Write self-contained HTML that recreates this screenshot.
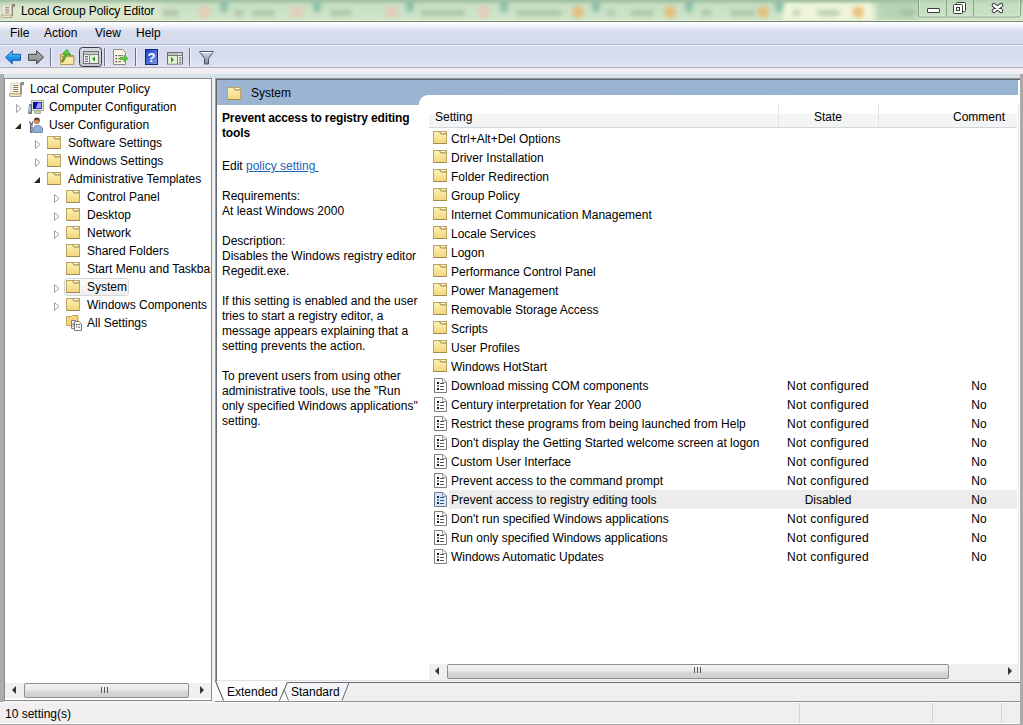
<!DOCTYPE html>
<html><head><meta charset="utf-8">
<style>
*{box-sizing:border-box;margin:0;padding:0}
html,body{width:1023px;height:725px;overflow:hidden;background:#f0f0f0}
body{position:relative;font-family:"Liberation Sans",sans-serif;font-size:12px;color:#000}
.a{position:absolute}
.t{position:absolute;white-space:nowrap;line-height:15px}
svg.i{position:absolute;overflow:visible}
#title{left:0;top:0;width:1023px;height:22px;background:linear-gradient(180deg,#b4d0b2 0%,#c8e0c4 30%,#d2e6ca 100%)}
#titleline{left:0;top:20px;width:1023px;height:2px;background:linear-gradient(180deg,#e0ecd8 0 1px,#7a8878 1px 2px)}
#menu{left:0;top:22px;width:1023px;height:23px;background:linear-gradient(180deg,#ffffff 0px,#fafbfe 2px,#e6e9f6 6px,#d8ddee 9px,#d5daec 100%)}
#menuline{left:0;top:44px;width:1023px;height:2px;background:linear-gradient(180deg,#b2b6c9 0 1px,#eef0fc 1px 2px)}
#tool{left:0;top:46px;width:1023px;height:21px;background:linear-gradient(180deg,#d6dbed 0%,#d7dcee 60%,#dfe3f3 100%)}
#toolline{left:0;top:67px;width:1023px;height:1px;background:#b0afb8}
#strip1{left:0;top:68px;width:1023px;height:6px;background:linear-gradient(180deg,#efeef0 0 5px,#eaf0f8 5px 6px)}
#strip2{left:0;top:74px;width:1023px;height:4px;background:#d6e2e8}
#lframe{left:0;top:74px;width:4px;height:651px;background:#acacac}
#rframe{left:1020px;top:74px;width:3px;height:651px;background:#aaaaaa}
#lpane{left:4px;top:78px;width:208px;height:623px;background:#fff;border:1px solid #8a8a8a}
#rpane{left:215px;top:78px;width:805px;height:603px;background:#fff}
#rpb1{left:215px;top:78px;width:805px;height:1px;background:#8c9498}
#rpb2{left:216px;top:79px;width:804px;height:1px;background:#5e6872}
#rpb3{left:215px;top:78px;width:1px;height:603px;background:#98a0a8}
#rpb4{left:216px;top:79px;width:1px;height:602px;background:#5e6872}
#rpb5{left:1018px;top:105px;width:1px;height:575px;background:#e6e6e6}
#hdr{left:217px;top:80px;width:801px;height:25px;background:linear-gradient(90deg,#a6b8cc 0px,#9ab4d2 6px,#99b4d1 100%)}
#listbg{left:419px;top:95px;width:599px;height:585px;background:#fff;border-top-left-radius:9px}
#status{left:0;top:703px;width:1020px;height:20px;background:#f0eeee}
.sb{background:#f0f0f0}
.thumb{background:linear-gradient(180deg,#f3f3f3 0%,#e9e9e9 45%,#d8d8d8 55%,#cfcfcf 100%);border:1px solid #8f8f8f;border-radius:2px}
.grip{width:7px;height:6px;background:repeating-linear-gradient(90deg,#555 0 1px,transparent 1px 3px)}
.larr{width:0;height:0;border-top:4px solid transparent;border-bottom:4px solid transparent;border-right:4px solid #333}
.rarr{width:0;height:0;border-top:4px solid transparent;border-bottom:4px solid transparent;border-left:4px solid #333}
.menu{top:26px}
.tr{top:0}
</style></head><body>
<svg width="0" height="0" style="position:absolute">
<defs>
<linearGradient id="fg" x1="0" y1="0" x2="0" y2="1"><stop offset="0" stop-color="#fdf1b6"/><stop offset="1" stop-color="#f1d77c"/></linearGradient>
<symbol id="fold" viewBox="0 0 14 13">
<rect x="0.5" y="0.5" width="13" height="12" fill="url(#fg)" stroke="#bba466"/>
<path d="M7.5 1 L13 1 L13 3 L8.5 3 Z" fill="#eadca0"/>
<rect x="8.5" y="1" width="3" height="1.3" fill="#fffdf0"/>
<path d="M6.5 0.8 L8 3 H13.2" fill="none" stroke="#8c7a44" stroke-width="0.9"/>
<path d="M0.5 12.5 H13.5" stroke="#a08a50" stroke-width="1"/>
</symbol>
<symbol id="doc" viewBox="0 0 13 15">
<path d="M0.5 0.5h8.5l3.5 3.5v10.5h-12z" fill="#fff" stroke="#7e7e7e"/>
<path d="M8.5 0.5v4h4" fill="none" stroke="#9a9a9a"/>
<rect x="3" y="4" width="2" height="2" fill="#111"/><rect x="3" y="7" width="2" height="2" fill="#888"/><rect x="3" y="10" width="2" height="2" fill="#111"/>
<rect x="6" y="5" width="4" height="1" fill="#555"/><rect x="6" y="8" width="4" height="1" fill="#555"/><rect x="6" y="11" width="4" height="1" fill="#555"/>
</symbol>
<symbol id="docsel" viewBox="0 0 13 15">
<path d="M0.5 0.5h8.5l3.5 3.5v10.5h-12z" fill="#d6e8fa" stroke="#6f7f90"/>
<path d="M8.5 0.5v4h4" fill="none" stroke="#8a9aaa"/>
<rect x="3" y="4" width="2" height="2" fill="#0a2a55"/><rect x="3" y="7" width="2" height="2" fill="#7890aa"/><rect x="3" y="10" width="2" height="2" fill="#0a2a55"/>
<rect x="6" y="5" width="4" height="1" fill="#3a5070"/><rect x="6" y="8" width="4" height="1" fill="#3a5070"/><rect x="6" y="11" width="4" height="1" fill="#3a5070"/>
</symbol>
<symbol id="tri" viewBox="0 0 6 9"><path d="M0.5 0.5l4.5 4-4.5 4z" fill="#fff" stroke="#a0a0a0"/></symbol>
<symbol id="trid" viewBox="0 0 6 6"><path d="M6 0v6h-6z" fill="#262626"/></symbol>
<symbol id="scroll" viewBox="0 0 15 15">
<path d="M2 1.2h10v11h-10z" fill="#fbf5e6" stroke="#cfc4aa" stroke-width="0.8"/>
<path d="M12 12.5v-10.5c0-0.8 0.6-1.5 1.4-1.5c0.9 0 1.3 1 0.8 1.7l-1 0.9" fill="none" stroke="#7a7260" stroke-width="1.3"/>
<path d="M4.2 3.5h5M4.2 5.5h5M4.2 7.5h5M4.2 9.5h5" stroke="#857b6a" stroke-width="1"/>
<path d="M0.6 11.8h11v2.7h-10.2c-0.8 0-1.2-0.6-1-1.4z" fill="#f3e6c2" stroke="#a39676" stroke-width="0.9"/>
</symbol>
</defs>
</svg>

<div id="title" class="a" style="overflow:hidden">
<div class="a" style="left:783px;top:2px;width:92px;height:24px;background:#eef5d8;border-radius:6px;filter:blur(2.5px)"></div>
<div class="a" style="left:0px;top:3px;width:165px;height:20px;background:#e0e9cf;border-radius:10px;filter:blur(5px);opacity:.8"></div>
<div class="a" style="left:878px;top:0;width:40px;height:22px;background:#a8c8a8;filter:blur(4px);opacity:.6"></div>
<div class="a" style="left:220px;top:-3px;width:8px;height:16px;background:#80bca4;border-radius:50%;filter:blur(2px);opacity:.85"></div>
<div class="a" style="left:313px;top:-3px;width:8px;height:16px;background:#80bca4;border-radius:50%;filter:blur(2px);opacity:.85"></div>
<div class="a" style="left:406px;top:-3px;width:8px;height:16px;background:#80bca4;border-radius:50%;filter:blur(2px);opacity:.85"></div>
<div class="a" style="left:500px;top:-3px;width:8px;height:16px;background:#80bca4;border-radius:50%;filter:blur(2px);opacity:.85"></div>
<div class="a" style="left:592px;top:-3px;width:8px;height:16px;background:#80bca4;border-radius:50%;filter:blur(2px);opacity:.85"></div>
<div class="a" style="left:685px;top:-3px;width:8px;height:16px;background:#80bca4;border-radius:50%;filter:blur(2px);opacity:.85"></div>
<div class="a" style="left:775px;top:-3px;width:8px;height:16px;background:#80bca4;border-radius:50%;filter:blur(2px);opacity:.85"></div>
<div class="a" style="left:199px;top:6px;width:12px;height:12px;background:#eec4b4;border-radius:50%;filter:blur(2px);opacity:.75"></div>
<div class="a" style="left:291px;top:6px;width:12px;height:12px;background:#eec4b4;border-radius:50%;filter:blur(2px);opacity:.75"></div>
<div class="a" style="left:386px;top:6px;width:12px;height:12px;background:#eec4b4;border-radius:50%;filter:blur(2px);opacity:.75"></div>
<div class="a" style="left:478px;top:6px;width:12px;height:12px;background:#eec4b4;border-radius:50%;filter:blur(2px);opacity:.75"></div>
<div class="a" style="left:572px;top:6px;width:12px;height:12px;background:#ecb464;border-radius:50%;filter:blur(2px);opacity:.75"></div>
<div class="a" style="left:664px;top:6px;width:12px;height:12px;background:#ecb464;border-radius:50%;filter:blur(2px);opacity:.75"></div>
<div class="a" style="left:757px;top:6px;width:12px;height:12px;background:#ecb464;border-radius:50%;filter:blur(2px);opacity:.75"></div>
<div class="a" style="left:852px;top:6px;width:12px;height:12px;background:#ecb464;border-radius:50%;filter:blur(2px);opacity:.75"></div>
<div class="a" style="left:162px;top:10px;width:17px;height:6px;background:#90aa8c;border-radius:3px;filter:blur(2px);opacity:.5"></div>
<div class="a" style="left:234px;top:10px;width:10px;height:6px;background:#90aa8c;border-radius:3px;filter:blur(2px);opacity:.5"></div>
<div class="a" style="left:252px;top:10px;width:23px;height:6px;background:#90aa8c;border-radius:3px;filter:blur(2px);opacity:.5"></div>
<div class="a" style="left:330px;top:10px;width:22px;height:6px;background:#90aa8c;border-radius:3px;filter:blur(2px);opacity:.5"></div>
<div class="a" style="left:420px;top:10px;width:45px;height:6px;background:#90aa8c;border-radius:3px;filter:blur(2px);opacity:.5"></div>
<div class="a" style="left:516px;top:10px;width:46px;height:6px;background:#90aa8c;border-radius:3px;filter:blur(2px);opacity:.5"></div>
<div class="a" style="left:607px;top:10px;width:8px;height:6px;background:#90aa8c;border-radius:3px;filter:blur(2px);opacity:.5"></div>
<div class="a" style="left:630px;top:10px;width:24px;height:6px;background:#90aa8c;border-radius:3px;filter:blur(2px);opacity:.5"></div>
<div class="a" style="left:701px;top:10px;width:11px;height:6px;background:#90aa8c;border-radius:3px;filter:blur(2px);opacity:.5"></div>
<div class="a" style="left:730px;top:10px;width:25px;height:6px;background:#90aa8c;border-radius:3px;filter:blur(2px);opacity:.5"></div>
<div class="a" style="left:793px;top:10px;width:7px;height:6px;background:#90aa8c;border-radius:3px;filter:blur(2px);opacity:.5"></div>
<div class="a" style="left:817px;top:10px;width:23px;height:6px;background:#90aa8c;border-radius:3px;filter:blur(2px);opacity:.5"></div>
<div class="a" style="left:900px;top:10px;width:15px;height:6px;background:#90aa8c;border-radius:3px;filter:blur(2px);opacity:.5"></div>
<div class="a" style="left:0;top:0;width:1023px;height:4px;background:linear-gradient(180deg,#a0bea0,rgba(180,208,178,0))"></div>
</div>
<div id="titleline" class="a"></div>
<svg class="i" style="left:917px;top:0" width="106" height="19" viewBox="0 0 106 19">
<path d="M1.5 0v14.5c0 1.5 1 2.5 2.5 2.5h97c1.5 0 2.5-1 2.5-2.5v-14.5" fill="#c4dec2" fill-opacity="0.6" stroke="#7f9e80" stroke-width="1"/>
<path d="M2.5 0v14c0 1 0.7 2 2 2h96c1.3 0 2-1 2-2v-14" fill="none" stroke="#e4f0e2" stroke-opacity="0.7" stroke-width="1"/>
<path d="M29.5 0v16.5M56.5 0v16.5" stroke="#8aa88a" stroke-width="1"/>
<rect x="10.5" y="8.5" width="12" height="4" rx="0.5" fill="#fff" stroke="#3a3a3a"/>
<rect x="39.5" y="2.5" width="9" height="9" rx="1" fill="#fff" stroke="#3a3a3a"/>
<rect x="36.5" y="4.5" width="9" height="9" rx="1" fill="#fff" stroke="#3a3a3a"/>
<rect x="39.5" y="7.5" width="3" height="3" fill="none" stroke="#3a3a3a"/>
<path d="M77 5.2 L84 10.8 M84 5.2 L77 10.8" stroke="#3a3a3a" stroke-width="4.6" stroke-linecap="round"/>
<path d="M77 5.2 L84 10.8 M84 5.2 L77 10.8" stroke="#fff" stroke-width="2.6" stroke-linecap="round"/>
</svg>
<svg class="i" style="left:1px;top:4px" width="14" height="14"><use href="#scroll" width="14" height="14"/></svg>
<div class="t" style="left:21px;top:4px;letter-spacing:-0.08px">Local Group Policy Editor</div>

<div id="menu" class="a"></div>
<div id="menuline" class="a"></div>
<div class="t menu" style="left:10px">File</div>
<div class="t menu" style="left:44px">Action</div>
<div class="t menu" style="left:95px">View</div>
<div class="t menu" style="left:136px">Help</div>

<div id="tool" class="a"></div>
<div id="toolline" class="a"></div>
<svg class="i" style="left:0;top:45px" width="230" height="22" viewBox="0 45 230 22">
<defs>
<linearGradient id="bb" x1="0" y1="0" x2="0" y2="1"><stop offset="0" stop-color="#7fd3ff"/><stop offset="0.5" stop-color="#1c9ae8"/><stop offset="1" stop-color="#0a64c8"/></linearGradient>
<linearGradient id="gb" x1="0" y1="0" x2="0" y2="1"><stop offset="0" stop-color="#b8b8b8"/><stop offset="1" stop-color="#858585"/></linearGradient>
<linearGradient id="pb" x1="0" y1="0" x2="0" y2="1"><stop offset="0" stop-color="#d9dbe3"/><stop offset="1" stop-color="#c4c7d2"/></linearGradient>
<linearGradient id="hb" x1="0" y1="0" x2="1" y2="1"><stop offset="0" stop-color="#1a3cc0"/><stop offset="1" stop-color="#7a9ae8"/></linearGradient>
<linearGradient id="fu" x1="0" y1="0" x2="0" y2="1"><stop offset="0" stop-color="#d8e0e8"/><stop offset="1" stop-color="#7a8a98"/></linearGradient>
</defs>
<!-- back -->
<path d="M5.5 57.3 L12.3 50.8 V54.3 H20.5 V60.3 H12.3 V63.8 Z" fill="url(#bb)" stroke="#1b5fa8" stroke-width="1" stroke-linejoin="round"/>
<!-- forward -->
<path d="M43.5 57.3 L36.7 50.8 V54.3 H28.5 V60.3 H36.7 V63.8 Z" fill="url(#gb)" stroke="#3d3d3d" stroke-width="1" stroke-linejoin="round"/>
<!-- sep -->
<rect x="50" y="48" width="1" height="18" fill="#6e7282"/><rect x="51" y="48" width="1" height="18" fill="#f4f5fa"/>
<!-- up folder -->
<path d="M60.5 54.5h4l1 1h8.3v9h-13.3z" fill="#f0d888" stroke="#b89c55"/>
<path d="M60.5 56.5h13.3v8h-13.3z" fill="#f9e6a4" stroke="#b89c55"/>
<path d="M62.5 61 L66.5 54" stroke="#58b83a" stroke-width="3" stroke-linecap="round"/>
<path d="M62.3 61.3 L64 58.3" stroke="#7a8a2a" stroke-width="2" stroke-linecap="round"/>
<path d="M62.8 53.5 L67 49.5 L70.8 55.2 Z" fill="#5ad040" stroke="#2f9a20" stroke-width="0.8" stroke-linejoin="round"/>
<!-- pressed button -->
<rect x="79.5" y="47.5" width="22" height="19" rx="3" fill="url(#pb)" stroke="#3a3d44" stroke-width="1"/>
<rect x="83.5" y="51.5" width="15" height="12" fill="#f4f4f4" stroke="#707070"/>
<rect x="84" y="52" width="14" height="2" fill="#c8c8c8"/>
<path d="M84 54.5h14" stroke="#8a8a8a"/>
<rect x="90" y="55" width="8" height="8" fill="#e6f4dc"/>
<path d="M89.5 55v8" stroke="#8a8a8a"/>
<rect x="85" y="56" width="3" height="1.2" fill="#6a6a6a"/><rect x="85" y="58.4" width="3" height="1.2" fill="#6a6a6a"/><rect x="85" y="60.8" width="3" height="1.2" fill="#6a6a6a"/>
<path d="M95 56.5 L92 59 L95 61.5 Z" fill="#3c8a2c"/>
<!-- sep -->
<rect x="104" y="48" width="1" height="18" fill="#6e7282"/><rect x="105" y="48" width="1" height="18" fill="#f4f5fa"/>
<!-- export -->
<path d="M113.5 49.5h9l3 3v12h-12z" fill="#fdf8e4" stroke="#8a8a80"/>
<rect x="115.5" y="55" width="1.3" height="1.3" fill="#222"/><rect x="115.5" y="58" width="1.3" height="1.3" fill="#222"/><rect x="115.5" y="61" width="1.3" height="1.3" fill="#222"/>
<rect x="118" y="55.2" width="5" height="1" fill="#666"/><rect x="118" y="58.2" width="3" height="1" fill="#666"/><rect x="118" y="61.2" width="3" height="1" fill="#666"/>
<path d="M120 57.5h4v-2.5l4 3.5-4 3.5v-2.5h-4z" fill="#5ccc3c" stroke="#3a9a28" stroke-width="0.6"/>
<!-- sep -->
<rect x="135" y="48" width="1" height="18" fill="#6e7282"/><rect x="136" y="48" width="1" height="18" fill="#f4f5fa"/>
<!-- help -->
<rect x="145.5" y="49.5" width="12" height="15" fill="url(#hb)" stroke="#14287a"/>
<text x="151.6" y="62.3" font-family="Liberation Sans" font-weight="bold" font-size="13" fill="#fff" text-anchor="middle">?</text>
<!-- action pane -->
<rect x="167.5" y="52.5" width="15" height="11.5" fill="#fff" stroke="#6e6e6e"/>
<rect x="168" y="53" width="14" height="2" fill="#bdbdbd"/>
<rect x="178" y="53.3" width="1.2" height="1.2" fill="#fff"/><rect x="180.2" y="53.3" width="1.2" height="1.2" fill="#fff"/>
<path d="M168 55.5h14" stroke="#7a7a7a"/>
<rect x="168" y="56" width="9" height="7.5" fill="#e2f2d4"/>
<path d="M177.5 56v8" stroke="#7a7a7a"/>
<path d="M171 57 L174 59.7 L171 62.4 Z" fill="#3f8a2e"/>
<rect x="179" y="57" width="2.5" height="1.2" fill="#6a6a6a"/><rect x="179" y="59.3" width="2.5" height="1.2" fill="#6a6a6a"/><rect x="179" y="61.6" width="2.5" height="1.2" fill="#6a6a6a"/>
<!-- sep -->
<rect x="189" y="48" width="1" height="18" fill="#6e7282"/><rect x="190" y="48" width="1" height="18" fill="#f4f5fa"/>
<!-- filter -->
<path d="M199.5 51.5h14l-5 7v5.5h-4v-5.5z" fill="url(#fu)" stroke="#4a5560" stroke-width="1" stroke-linejoin="round"/>
<path d="M200.5 52.5h12" stroke="#f4f8fa" stroke-width="1"/>
</svg>
<div id="strip1" class="a"></div>
<div id="strip2" class="a"></div>
<div id="lframe" class="a"></div>
<div id="rframe" class="a"></div>

<!-- left tree pane -->
<div id="lpane" class="a"></div>
<svg class="i" style="left:9px;top:82px" width="15" height="15"><use href="#scroll" width="15" height="15"/></svg>
<div class="t" style="left:30px;top:82px">Local Computer Policy</div>
<svg class="i" style="left:16px;top:104px" width="6" height="9"><use href="#tri" width="6" height="9"/></svg>
<svg class="i" style="left:28px;top:100px" width="16" height="14" viewBox="0 0 16 14">
<rect x="3.5" y="0.5" width="12" height="10" fill="#d8e2c8" stroke="#a7b39a"/>
<rect x="5" y="2" width="9" height="7" fill="#3232e0"/>
<path d="M5 2h5l-3 7h-2z" fill="#0a0ab0"/><path d="M10 3h3v5h-5z" fill="#9c9cf0"/>
<path d="M6.5 11h6v2.5h-6z" fill="#c9cfb4" stroke="#a5ab92" stroke-width="0.8"/>
<path d="M1.5 4.5h2v9h-2.8z" fill="#8d9bb0" stroke="#5f6f86" stroke-width="1"/>
<path d="M1.8 6v6" stroke="#e9eef5" stroke-width="0.8"/>
</svg>
<div class="t" style="left:49px;top:100px">Computer Configuration</div>
<svg class="i" style="left:15px;top:123px" width="6" height="6"><use href="#trid" width="6" height="6"/></svg>
<svg class="i" style="left:28px;top:117px" width="16" height="16" viewBox="0 0 16 16">
<path d="M5 15.5v-3.5c0-2 1.8-3.5 4.5-3.5s5 1.5 5 3.5v3.5z" fill="#8fb0d2" stroke="#6f8eb0" stroke-width="1"/>
<circle cx="8.8" cy="4.3" r="3" fill="#c98d62"/>
<path d="M5.8 3.8c0-2.5 1.5-3.3 3-3.3s3 0.8 3 3l-0.8 1c-0.3-1.5-1.5-2-2.8-1.7z" fill="#5a3a22"/>
<path d="M1.5 4.5l1 2.5v8.5h1.5v-8.5l1-2.5-1 2h-1.5z" fill="#b9c7d8" stroke="#4a5a70" stroke-width="0.9"/>
</svg>
<div class="t" style="left:49px;top:118px">User Configuration</div>

<svg class="i" style="left:35px;top:140px" width="6" height="9"><use href="#tri" width="6" height="9"/></svg>
<svg class="i" style="left:47px;top:136px" width="14" height="13"><use href="#fold" width="14" height="13"/></svg>
<div class="t" style="left:68px;top:136px">Software Settings</div>
<svg class="i" style="left:35px;top:158px" width="6" height="9"><use href="#tri" width="6" height="9"/></svg>
<svg class="i" style="left:47px;top:154px" width="14" height="13"><use href="#fold" width="14" height="13"/></svg>
<div class="t" style="left:68px;top:154px">Windows Settings</div>
<svg class="i" style="left:34px;top:177px" width="6" height="6"><use href="#trid" width="6" height="6"/></svg>
<svg class="i" style="left:47px;top:172px" width="14" height="13"><use href="#fold" width="14" height="13"/></svg>
<div class="t" style="left:68px;top:172px">Administrative Templates</div>

<svg class="i" style="left:54px;top:194px" width="6" height="9"><use href="#tri" width="6" height="9"/></svg>
<svg class="i" style="left:66px;top:190px" width="14" height="13"><use href="#fold" width="14" height="13"/></svg>
<div class="t" style="left:87px;top:190px">Control Panel</div>
<svg class="i" style="left:54px;top:212px" width="6" height="9"><use href="#tri" width="6" height="9"/></svg>
<svg class="i" style="left:66px;top:208px" width="14" height="13"><use href="#fold" width="14" height="13"/></svg>
<div class="t" style="left:87px;top:208px">Desktop</div>
<svg class="i" style="left:54px;top:230px" width="6" height="9"><use href="#tri" width="6" height="9"/></svg>
<svg class="i" style="left:66px;top:226px" width="14" height="13"><use href="#fold" width="14" height="13"/></svg>
<div class="t" style="left:87px;top:226px">Network</div>
<svg class="i" style="left:66px;top:244px" width="14" height="13"><use href="#fold" width="14" height="13"/></svg>
<div class="t" style="left:87px;top:244px">Shared Folders</div>
<svg class="i" style="left:66px;top:262px" width="14" height="13"><use href="#fold" width="14" height="13"/></svg>
<div class="a" style="left:87px;top:262px;width:124px;height:16px;overflow:hidden"><div class="t" style="left:0;top:0">Start Menu and Taskbar</div></div>
<div class="a" style="left:64px;top:278px;width:65px;height:18px;background:linear-gradient(180deg,#fcfcfc,#efefef);border:1px solid #d6d6d6;border-radius:3px"></div>
<svg class="i" style="left:54px;top:284px" width="6" height="9"><use href="#tri" width="6" height="9"/></svg>
<svg class="i" style="left:66px;top:280px" width="14" height="13"><use href="#fold" width="14" height="13"/></svg>
<div class="t" style="left:87px;top:280px">System</div>
<svg class="i" style="left:54px;top:302px" width="6" height="9"><use href="#tri" width="6" height="9"/></svg>
<svg class="i" style="left:66px;top:298px" width="14" height="13"><use href="#fold" width="14" height="13"/></svg>
<div class="a" style="left:87px;top:298px;width:124px;height:16px;overflow:hidden"><div class="t" style="left:0;top:0">Windows Components</div></div>
<svg class="i" style="left:66px;top:315px" width="16" height="16" viewBox="0 0 16 16">
<path d="M0.5 1.5h5l1-1h5.5v10h-11.5z" fill="#f3d77f" stroke="#c2a35a"/>
<path d="M5.5 5.5h4l2 2v6h-6z" fill="#fff" stroke="#7d7d7d"/>
<path d="M8.5 6.5h4.5l2.5 2.5v6.5h-7z" fill="#fff" stroke="#7a7a7a"/>
<rect x="10" y="9" width="1.2" height="1.2" fill="#222"/><rect x="12" y="9.2" width="2.2" height="0.9" fill="#555"/>
<rect x="10" y="11.5" width="1.2" height="1.2" fill="#777"/><rect x="12" y="11.7" width="2.2" height="0.9" fill="#555"/>
<rect x="6.5" y="8.5" width="1.2" height="1.2" fill="#222"/><rect x="6.5" y="10.5" width="1.2" height="1.2" fill="#777"/>
</svg>
<div class="t" style="left:87px;top:316px">All Settings</div>

<!-- right pane -->
<div id="rpane" class="a"></div><div id="rpb1" class="a"></div><div id="rpb2" class="a"></div><div id="rpb3" class="a"></div><div id="rpb4" class="a"></div><div id="rpb5" class="a"></div>
<div id="hdr" class="a"></div>
<svg class="i" style="left:227px;top:87px" width="14" height="13"><use href="#fold" width="14" height="13"/></svg>
<div class="t" style="left:251px;top:86px">System</div>
<div id="listbg" class="a"></div>
<!-- description -->
<div class="t" style="left:222px;top:111px;font-weight:bold;letter-spacing:-0.14px">Prevent access to registry editing</div>
<div class="t" style="left:222px;top:126px;font-weight:bold;letter-spacing:-0.14px">tools</div>
<div class="t" style="left:222px;top:159px">Edit <span style="color:#1c62b9;text-decoration:underline">policy setting&nbsp;</span></div>
<div class="t" style="left:222px;top:189px">Requirements:</div>
<div class="t" style="left:222px;top:204px">At least Windows 2000</div>
<div class="t" style="left:222px;top:234px">Description:</div>
<div class="t" style="left:222px;top:249px">Disables the Windows registry editor</div>
<div class="t" style="left:222px;top:264px">Regedit.exe.</div>
<div class="t" style="left:222px;top:294px">If this setting is enabled and the user</div>
<div class="t" style="left:222px;top:309px">tries to start a registry editor, a</div>
<div class="t" style="left:222px;top:324px">message appears explaining that a</div>
<div class="t" style="left:222px;top:339px">setting prevents the action.</div>
<div class="t" style="left:222px;top:369px">To prevent users from using other</div>
<div class="t" style="left:222px;top:384px">administrative tools, use the "Run</div>
<div class="t" style="left:222px;top:399px">only specified Windows applications"</div>
<div class="t" style="left:222px;top:414px">setting.</div>
<!-- list header -->
<div class="a" style="left:429px;top:104px;width:588px;height:24px;background:linear-gradient(180deg,#fff 0%,#fff 42%,#f3f4f6 46%,#f3f4f6 100%);border-bottom:1px solid #d5d5d5"></div>
<div class="a" style="left:778px;top:104px;width:1px;height:23px;background:#e2e3e5"></div>
<div class="a" style="left:878px;top:104px;width:1px;height:23px;background:#e2e3e5"></div>
<div class="t" style="left:435px;top:110px">Setting</div>
<div class="t" style="left:778px;width:100px;text-align:center;top:110px">State</div>
<div class="t" style="left:929px;width:100px;text-align:center;top:110px">Comment</div>
<svg class="i" style="left:433px;top:131px" width="14" height="13"><use href="#fold" width="14" height="13"/></svg><div class="t" style="left:451px;top:132px">Ctrl+Alt+Del Options</div>
<svg class="i" style="left:433px;top:150px" width="14" height="13"><use href="#fold" width="14" height="13"/></svg><div class="t" style="left:451px;top:151px">Driver Installation</div>
<svg class="i" style="left:433px;top:169px" width="14" height="13"><use href="#fold" width="14" height="13"/></svg><div class="t" style="left:451px;top:170px">Folder Redirection</div>
<svg class="i" style="left:433px;top:188px" width="14" height="13"><use href="#fold" width="14" height="13"/></svg><div class="t" style="left:451px;top:189px">Group Policy</div>
<svg class="i" style="left:433px;top:207px" width="14" height="13"><use href="#fold" width="14" height="13"/></svg><div class="t" style="left:451px;top:208px">Internet Communication Management</div>
<svg class="i" style="left:433px;top:226px" width="14" height="13"><use href="#fold" width="14" height="13"/></svg><div class="t" style="left:451px;top:227px">Locale Services</div>
<svg class="i" style="left:433px;top:245px" width="14" height="13"><use href="#fold" width="14" height="13"/></svg><div class="t" style="left:451px;top:246px">Logon</div>
<svg class="i" style="left:433px;top:264px" width="14" height="13"><use href="#fold" width="14" height="13"/></svg><div class="t" style="left:451px;top:265px">Performance Control Panel</div>
<svg class="i" style="left:433px;top:283px" width="14" height="13"><use href="#fold" width="14" height="13"/></svg><div class="t" style="left:451px;top:284px">Power Management</div>
<svg class="i" style="left:433px;top:302px" width="14" height="13"><use href="#fold" width="14" height="13"/></svg><div class="t" style="left:451px;top:303px">Removable Storage Access</div>
<svg class="i" style="left:433px;top:321px" width="14" height="13"><use href="#fold" width="14" height="13"/></svg><div class="t" style="left:451px;top:322px">Scripts</div>
<svg class="i" style="left:433px;top:340px" width="14" height="13"><use href="#fold" width="14" height="13"/></svg><div class="t" style="left:451px;top:341px">User Profiles</div>
<svg class="i" style="left:433px;top:359px" width="14" height="13"><use href="#fold" width="14" height="13"/></svg><div class="t" style="left:451px;top:360px">Windows HotStart</div>
<svg class="i" style="left:434px;top:378px" width="13" height="15"><use href="#doc" width="13" height="15"/></svg><div class="t" style="left:451px;top:379px">Download missing COM components</div>
<div class="t" style="left:778px;width:100px;text-align:center;top:379px;letter-spacing:0.28px">Not configured</div><div class="t" style="left:929px;width:100px;text-align:center;top:379px">No</div>
<svg class="i" style="left:434px;top:397px" width="13" height="15"><use href="#doc" width="13" height="15"/></svg><div class="t" style="left:451px;top:398px">Century interpretation for Year 2000</div>
<div class="t" style="left:778px;width:100px;text-align:center;top:398px;letter-spacing:0.28px">Not configured</div><div class="t" style="left:929px;width:100px;text-align:center;top:398px">No</div>
<svg class="i" style="left:434px;top:416px" width="13" height="15"><use href="#doc" width="13" height="15"/></svg><div class="t" style="left:451px;top:417px">Restrict these programs from being launched from Help</div>
<div class="t" style="left:778px;width:100px;text-align:center;top:417px;letter-spacing:0.28px">Not configured</div><div class="t" style="left:929px;width:100px;text-align:center;top:417px">No</div>
<svg class="i" style="left:434px;top:435px" width="13" height="15"><use href="#doc" width="13" height="15"/></svg><div class="t" style="left:451px;top:436px">Don&#39;t display the Getting Started welcome screen at logon</div>
<div class="t" style="left:778px;width:100px;text-align:center;top:436px;letter-spacing:0.28px">Not configured</div><div class="t" style="left:929px;width:100px;text-align:center;top:436px">No</div>
<svg class="i" style="left:434px;top:454px" width="13" height="15"><use href="#doc" width="13" height="15"/></svg><div class="t" style="left:451px;top:455px">Custom User Interface</div>
<div class="t" style="left:778px;width:100px;text-align:center;top:455px;letter-spacing:0.28px">Not configured</div><div class="t" style="left:929px;width:100px;text-align:center;top:455px">No</div>
<svg class="i" style="left:434px;top:473px" width="13" height="15"><use href="#doc" width="13" height="15"/></svg><div class="t" style="left:451px;top:474px">Prevent access to the command prompt</div>
<div class="t" style="left:778px;width:100px;text-align:center;top:474px;letter-spacing:0.28px">Not configured</div><div class="t" style="left:929px;width:100px;text-align:center;top:474px">No</div>
<div class="a" style="left:449px;top:490px;width:568px;height:19px;background:#ececec"></div>
<svg class="i" style="left:434px;top:492px" width="13" height="15"><use href="#docsel" width="13" height="15"/></svg><div class="t" style="left:451px;top:493px">Prevent access to registry editing tools</div>
<div class="t" style="left:778px;width:100px;text-align:center;top:493px">Disabled</div><div class="t" style="left:929px;width:100px;text-align:center;top:493px">No</div>
<svg class="i" style="left:434px;top:511px" width="13" height="15"><use href="#doc" width="13" height="15"/></svg><div class="t" style="left:451px;top:512px">Don&#39;t run specified Windows applications</div>
<div class="t" style="left:778px;width:100px;text-align:center;top:512px;letter-spacing:0.28px">Not configured</div><div class="t" style="left:929px;width:100px;text-align:center;top:512px">No</div>
<svg class="i" style="left:434px;top:530px" width="13" height="15"><use href="#doc" width="13" height="15"/></svg><div class="t" style="left:451px;top:531px">Run only specified Windows applications</div>
<div class="t" style="left:778px;width:100px;text-align:center;top:531px;letter-spacing:0.28px">Not configured</div><div class="t" style="left:929px;width:100px;text-align:center;top:531px">No</div>
<svg class="i" style="left:434px;top:549px" width="13" height="15"><use href="#doc" width="13" height="15"/></svg><div class="t" style="left:451px;top:550px">Windows Automatic Updates</div>
<div class="t" style="left:778px;width:100px;text-align:center;top:550px;letter-spacing:0.28px">Not configured</div><div class="t" style="left:929px;width:100px;text-align:center;top:550px">No</div>

<!-- left scrollbar -->
<div class="a sb" style="left:5px;top:683px;width:206px;height:15px"></div>
<div class="a thumb" style="left:24px;top:683px;width:165px;height:15px"></div>
<div class="a grip" style="left:101px;top:687px"></div>
<div class="a larr" style="left:12px;top:686px"></div>
<div class="a rarr" style="left:200px;top:686px"></div>
<!-- right scrollbar -->
<div class="a sb" style="left:429px;top:664px;width:589px;height:16px"></div>
<div class="a thumb" style="left:447px;top:664px;width:502px;height:15px"></div>
<div class="a grip" style="left:694px;top:667px"></div>
<div class="a larr" style="left:435px;top:667px"></div>
<div class="a rarr" style="left:1008px;top:667px"></div>
<!-- tabs -->
<div class="a" style="left:217px;top:680px;width:803px;height:1px;background:#e0e0e0"></div>
<div class="a" style="left:212px;top:681px;width:808px;height:20px;background:#f0f0f0"></div>
<svg class="i" style="left:212px;top:680px" width="808" height="22">
<rect x="0" y="1" width="808" height="20" fill="#fafafa"/>
<rect x="130" y="3" width="678" height="18" fill="#efefef"/>
<path d="M3 1 L75 1 L67 20 L11 20 Z" fill="#fcfcfc"/>
<path d="M75 2.5 L137 2.5 L130 20 L76 20 L72 9 Z" fill="#f4f5f8"/>
<path d="M3.5 1 L11.5 20.5" stroke="#444" stroke-width="1" fill="none"/>
<path d="M75.5 2 L67.5 20.5" stroke="#555" stroke-width="1" fill="none"/>
<path d="M72 9.5 L76.5 20.5" stroke="#777" stroke-width="1" fill="none"/>
<path d="M75 2.5 H808 M137 2.5 L130 20.5" stroke="#6a6a6a" stroke-width="1" fill="none"/>
</svg>
<div class="a" style="left:215px;top:701px;width:805px;height:1px;background:#8e8e8e"></div><div class="a" style="left:215px;top:702px;width:805px;height:1px;background:#fff"></div>
<div class="t" style="left:227px;top:685px">Extended</div>
<div class="t" style="left:291px;top:685px">Standard</div>
<!-- status -->
<div id="status" class="a"></div>
<div class="a" style="left:799px;top:703px;width:1px;height:20px;background:#d4d0d0"></div><div class="a" style="left:932px;top:703px;width:1px;height:20px;background:#d4d0d0"></div>
<div class="a" style="left:1001px;top:703px;width:1px;height:20px;background:#d8d4d4"></div>
<div class="a" style="left:0;top:702px;width:1020px;height:1px;background:#fbfbfb"></div><div class="a" style="left:0;top:723px;width:1020px;height:1px;background:#fbfbfb"></div><div class="a" style="left:0;top:724px;width:1023px;height:1px;background:#aaaaaa"></div>
<div class="t" style="left:5px;top:707px">10 setting(s)</div>

</body></html>
